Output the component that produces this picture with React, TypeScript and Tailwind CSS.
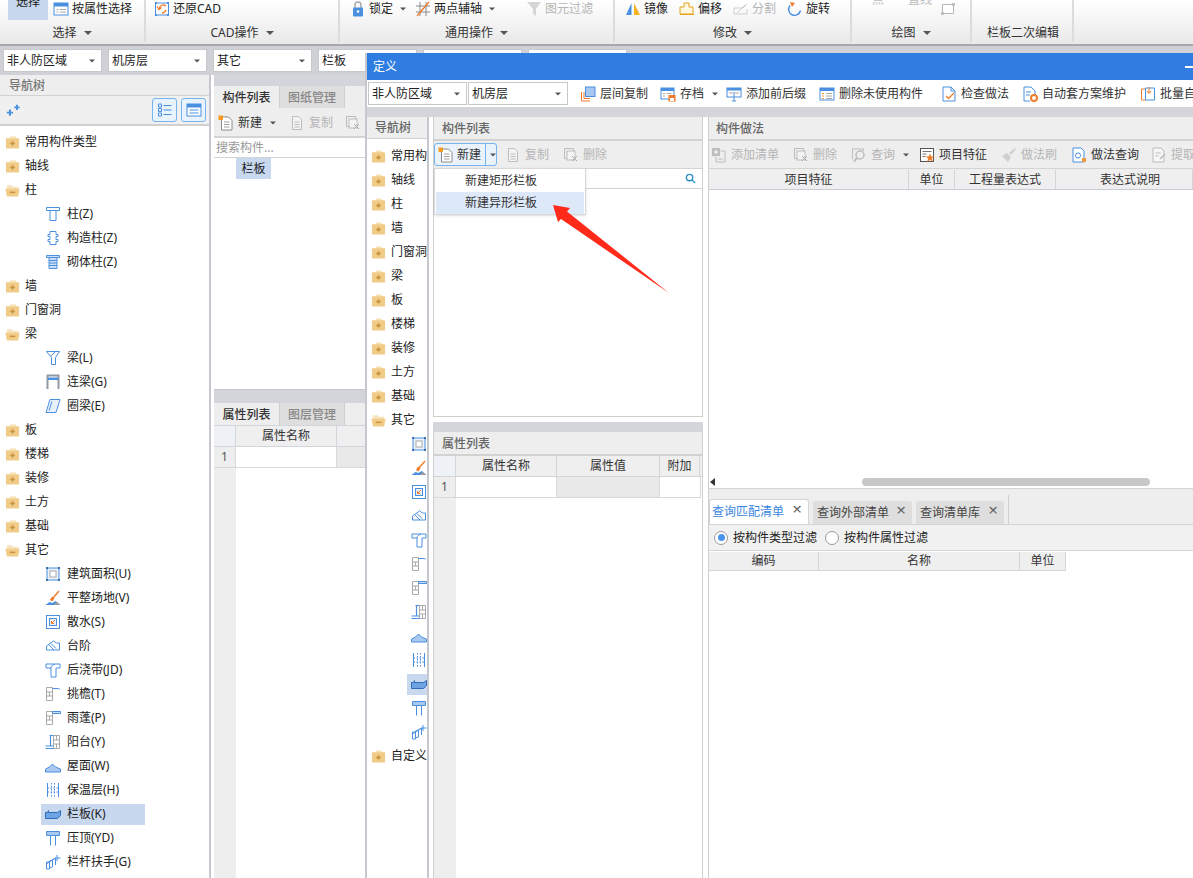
import React from 'react';

const B = '#4a8fe0';
const G = '#a9a9a9';

// 16x16 toolbar and tree icons, drawn to follow the reference glyphs
const glyphs: Record<string, React.ReactNode> = {
  folderClosed: (
    <>
      <path d="M5 1.500h6.500v2.500H5z" fill="#f7e3bb" />
      <rect x="1" y="3.500" width="14" height="11" rx="1" fill="#f0cc88" />
      <path d="M8 6.500v5M5.500 9h5" stroke="#c9913a" strokeWidth="1.500" />
    </>
  ),
  folderOpen: (
    <>
      <path d="M2 2.500h5l1 1.500h6v3H2z" fill="#f7e3bb" />
      <path d="M0.500 6h15l-1.500 8.500H2z" fill="#f0cc88" />
      <path d="M5 10h6" stroke="#c9913a" strokeWidth="1.500" />
    </>
  ),
  zhu: <path d="M1.500 1.500h13v3h-13zM5 4.500v10h6v-10" fill="none" stroke={B} />,
  gouzao: <path d="M5 1.500h6v3h2v2h-2v3h2v2h-2v3H5v-3H3v-2h2v-3H3v-2h2z" fill="#fff" stroke={B} />,
  qiti: <path d="M1.500 1.500h13v2h-13zM4 3.500h8v11H4zM4 6.500h8M4 9h8M4 11.500h8" fill="#cfe0f5" stroke={B} />,
  liang: <path d="M1.500 1.500h13l-4 6v7h-4v-7zM6 6l4-4" fill="none" stroke={B} />,
  lianliang: (
    <>
      <path d="M2.500 15V1.500h11V15" fill="none" stroke="#8f9aa6" strokeWidth="2" />
      <path d="M3 3.500h10v2.500H3z" fill={B} />
    </>
  ),
  quanliang: <path d="M5 1.500h10l-4 13H1zM7 3.500l-3 9" fill="#e9f1fb" stroke={B} />,
  jianzhu: (
    <>
      <rect x="2" y="2" width="12" height="12" fill="#e9f1fb" stroke={B} />
      <rect x="5" y="5" width="6" height="6" fill="#fff" stroke={G} />
      <path d="M1 1h2v2H1zM13 1h2v2h-2zM1 13h2v2H1zM13 13h2v2h-2z" fill="#3f6fae" />
    </>
  ),
  pingzheng: (
    <>
      <path d="M0.500 15l4-3 3 1 3-2 5 4z" fill={B} />
      <path d="M5 10l2-3.500 2.500 1.500-2 3.500z" fill="#ef7d2c" />
      <path d="M8 8l6-7" stroke="#ef7d2c" strokeWidth="1.400" />
      <path d="M9 15l2.500-3.500 3.500 3.500z" fill="#9a9a9a" />
    </>
  ),
  sanshui: (
    <>
      <rect x="1.500" y="1.500" width="13" height="13" fill="#fff" stroke={B} />
      <rect x="4.500" y="4.500" width="7" height="7" fill="#e9f1fb" stroke={B} />
      <path d="M10 6l-3 3M6.500 7v2.500H9" fill="none" stroke="#ef7d2c" />
    </>
  ),
  taijie: <path d="M1.500 8l7-5 3 2h3v7h-13zM4 7l5 5M6 5.500l5 5" fill="#fff" stroke={B} />,
  houjiao: <path d="M1 2h14v4h-4v9H6V6H1zM6 6c0-2 1.500-3 4-4" fill="#fff" stroke={B} />,
  tiaoyan: (
    <>
      <path d="M1.500 1.500h6v13h-6zM1.500 6h6M1.500 10h6M4.500 6v4" fill="none" stroke={G} />
      <path d="M7.500 2.500h6l1.500 1" fill="none" stroke={B} />
    </>
  ),
  yupeng: (
    <>
      <path d="M1.500 1.500h6v13h-6zM1.500 6h6M1.500 10h6M4.500 6v4" fill="none" stroke={G} />
      <path d="M7.500 1.500h8v2h-8z" fill="#cfe0f5" stroke={B} />
    </>
  ),
  yangtai: (
    <>
      <path d="M8.500 1.500h6v13h-6zM8.500 6h6M8.500 10h6M11.500 1.500v4.500M11.500 10v4.500" fill="none" stroke={G} />
      <path d="M4.500 1.500h4M5.500 1.500v10M0.500 12h8M0.500 14.500h8" fill="none" stroke={B} strokeWidth="1.200" />
    </>
  ),
  wumian: <path d="M0.500 11l4-2 3-3 3 3 5 2v3h-15z" fill="#a9c8ef" stroke={B} />,
  baowen: (
    <>
      <path d="M2.500 1v14M13.500 1v14" stroke={B} />
      <path d="M6.500 1v14M9.500 1v14" stroke={B} strokeDasharray="1.500 1.500" />
      <path d="M2.500 6h11M2.500 10h11" stroke={B} strokeDasharray="1.500 1.500" />
    </>
  ),
  lanban: <path d="M0.500 6.500h2l1-2v2h9l3-2v5l-3 3h-12z" fill="#6ea3e4" stroke="#2f6db8" />,
  yading: <path d="M1.500 1.500h13v4h-13zM5.500 5.500v10M10.500 5.500v10" fill="#a9c8ef" stroke={B} />,
  langan: <path d="M1.500 8v7h3V8zM4.500 7l3-1v7l-3 1zM7.500 6l3-2v7M10.500 4h5M12 1v6M1.500 10l9-6" fill="none" stroke={B} />,
  list: (
    <>
      <path d="M1.500 2h3v3h-3zM1.500 6.500h3v3h-3zM1.500 11h3v3h-3z" fill="none" stroke={B} />
      <path d="M6.500 3.500h8M6.500 8h8M6.500 12.500h8" stroke={B} />
    </>
  ),
  panel: (
    <>
      <rect x="1" y="2" width="14" height="12" fill="#fff" stroke={B} />
      <path d="M1 2h14v3.500H1z" fill={B} />
      <path d="M3.500 8h9M3.500 11h9" stroke={B} />
    </>
  ),
  addNode: <path d="M1 11h7M4.500 7.500v7M9.500 5h6M12.500 2v6" stroke={B} strokeWidth="2.200" />,
  attrSel: (
    <>
      <rect x="1" y="2" width="14" height="12" fill="#fff" stroke={B} />
      <path d="M1 2h14v3.500H1z" fill={B} />
      <path d="M3.500 8.500h2M3.500 11h2M7 8.500h6M7 11h6" stroke={G} />
    </>
  ),
  restore: (
    <>
      <rect x="1.500" y="2" width="13" height="12" fill="none" stroke={B} />
      <path d="M1 1h2v2H1zM13 1h2v2h-2zM1 13h2v2H1zM13 13h2v2h-2z" fill={B} />
      <path d="M12 5c-3-2-6-1-7 3M3 5.500l2 3 2.500-2M8 12c2 0 3-1 4-3" fill="none" stroke="#ef7d2c" strokeWidth="1.300" />
    </>
  ),
  lock: (
    <>
      <path d="M5 7V4a3 3 0 016 0v3" fill="none" stroke={G} strokeWidth="1.500" />
      <rect x="3" y="6.500" width="10" height="9" rx="1" fill={B} />
      <circle cx="8" cy="10.500" r="1.300" fill="#fff" />
    </>
  ),
  axis: (
    <>
      <path d="M5 1v14M11 1v14M1 5h14M1 11h14" stroke="#8a8a8a" />
      <path d="M2 15L14 1" stroke="#ef7d2c" strokeWidth="1.300" />
    </>
  ),
  filter: <path d="M1 1h14l-5 7v7l-3-2V8z" fill="#d5d5d5" />,
  mirror: (
    <>
      <path d="M6.500 2v12H1z" fill={B} />
      <path d="M9 2v12h6z" fill="#f5b321" />
    </>
  ),
  offset: <path d="M5 2h5v4h4v7H1V6h4zM1 13.500h14" fill="#fff7de" stroke="#e2a21d" />,
  split: <path d="M1 13V7h9l4-4M1 13h13V8M4 12l8-8" fill="none" stroke="#cfcfcf" />,
  rotate: (
    <>
      <path d="M13.500 9.500A6 6 0 113 4.500" fill="none" stroke={B} strokeWidth="1.400" />
      <path d="M3 1l5 1-3 4z" fill="#ef7d2c" />
    </>
  ),
  rect: <path d="M2.500 3.500h11v9h-11zM1.500 11.500h2v2h-2zM12.500 2.500h2v2h-2z" fill="#fff" stroke="#b8b8b8" />,
  floorCopy: (
    <>
      <path d="M1.500 15V6M1.500 15H10M4 12.500V6M4 12.500h6" fill="none" stroke="#ef7d2c" />
      <rect x="5.500" y="1" width="9.500" height="9.500" fill="#a9c8ef" stroke={B} />
    </>
  ),
  archive: (
    <>
      <rect x="1" y="2" width="13" height="11" fill="#fff" stroke={B} />
      <path d="M1 2h13v3H1z" fill={B} />
      <path d="M3 7.500h2M3 10h2M6.500 7.500h5" stroke={G} />
      <rect x="8.500" y="9" width="7" height="6.500" fill="#ef7d2c" />
      <rect x="10" y="12" width="4" height="3" fill="#fff" />
    </>
  ),
  prefix: (
    <>
      <rect x="1" y="2" width="14" height="9" fill="#fff" stroke={B} />
      <path d="M1 2h14v2.500H1z" fill={B} />
      <path d="M3 7h4M9 7h4" stroke={G} />
      <path d="M8 6v9M6 15h4" stroke={B} />
    </>
  ),
  delUnused: (
    <>
      <rect x="1" y="2" width="14" height="12" fill="#fff" stroke={B} />
      <path d="M1 2h14v3H1z" fill={B} />
      <path d="M3 7.500h2M3 10h2M3 12.500h2" stroke="#ef9a3c" />
      <path d="M7 7.500h6M7 10h6M7 12.500h6" stroke={G} />
    </>
  ),
  check: (
    <>
      <path d="M2 1h8l4 4v10H2z" fill="#fff" stroke={B} />
      <path d="M10 1v4h4" fill="none" stroke={B} />
      <path d="M5 10l2.500 2.500L13 7" fill="none" stroke="#ef7d2c" strokeWidth="1.300" />
    </>
  ),
  autoPlan: (
    <>
      <path d="M2 1h7l4 4v5M2 1v14h6" fill="#fff" stroke={B} />
      <path d="M4 6h5M4 9h4" stroke={B} />
      <circle cx="12" cy="12" r="3" fill="none" stroke="#ef7d2c" strokeWidth="2" />
    </>
  ),
  batch: (
    <>
      <path d="M1.500 3h4v11h-4z" fill="#fff" stroke="#ef7d2c" />
      <path d="M5.500 2h9v12h-9z" fill="#fff" stroke={B} />
      <path d="M9 1v6M7 5l2 2.500L11 5" fill="none" stroke="#ef7d2c" />
    </>
  ),
  newDoc: (
    <>
      <path d="M3.500 2h7l3.500 3.500V15h-10.500z" fill="#fff" stroke="#8a8a8a" />
      <path d="M6 7h5.500M6 9.500h5.500M6 12h5.500" stroke="#a0a0a0" />
      <rect x="0.500" y="0.500" width="4.500" height="4.500" fill="#f59a23" />
    </>
  ),
  copy: (
    <>
      <path d="M3.500 1.500h6l3 3v10h-9z" fill="#f3f3f3" stroke="#bdbdbd" />
      <path d="M5.500 7h5M5.500 9.500h5M5.500 12h5" stroke="#bdbdbd" />
    </>
  ),
  del: (
    <>
      <path d="M1.500 1.500h9v3M1.500 1.500v10h4" fill="none" stroke="#bdbdbd" />
      <rect x="4" y="4" width="8" height="9" fill="#f3f3f3" stroke="#bdbdbd" />
      <path d="M9 9l5 5M14 9l-5 5" stroke="#a8a8a8" />
    </>
  ),
  addList: (
    <>
      <rect x="1" y="1" width="8" height="8" fill="#bdbdbd" />
      <path d="M5 3v4M3 5h4" stroke="#fff" />
      <path d="M9.500 4h4.500v11H5V9.500" fill="none" stroke="#bdbdbd" />
      <path d="M7 12h5" stroke="#bdbdbd" />
    </>
  ),
  query: (
    <>
      <path d="M1.500 12V2h11v2" fill="none" stroke="#bdbdbd" />
      <circle cx="9" cy="8" r="4" fill="none" stroke="#bdbdbd" strokeWidth="1.500" />
      <path d="M6 11l-3 3.500" stroke="#bdbdbd" strokeWidth="2" />
    </>
  ),
  feature: (
    <>
      <rect x="1.500" y="1.500" width="13" height="13" fill="#fff" stroke="#555" />
      <path d="M3.500 4.500h9M3.500 7h4M3.500 9.500h3" stroke="#777" />
      <path d="M11 6.500l1.300 3h3l-2.400 2 .9 3.200L11 13l-2.800 1.700.9-3.200-2.400-2h3z" fill="#ef7d2c" />
    </>
  ),
  brush: <path d="M1 9l5-3 4 4-3 5zM8 6l6-5 1 1-5 6z" fill="#cfcfcf" />,
  methodQuery: (
    <>
      <path d="M2 1h8l3 3v11H2z" fill="#fff" stroke={B} />
      <circle cx="7" cy="8.500" r="2.600" fill="none" stroke={B} />
      <rect x="11" y="11" width="4" height="4" fill="#ef9a3c" />
    </>
  ),
  extract: (
    <>
      <path d="M2 1h8l3 3v11H2z" fill="#f5f5f5" stroke="#bdbdbd" />
      <path d="M4.500 6h5M4.500 9h3" stroke="#bdbdbd" />
      <path d="M9 12l5-5" stroke="#bdbdbd" strokeWidth="1.500" />
    </>
  ),
};

const Icon = ({ name, className = 'w-4 h-4' }: { name: string; className?: string }) => (
  <svg viewBox="0 0 16 16" className={`${className} shrink-0`}>
    {glyphs[name]}
  </svg>
);

const Caret = ({ className = '' }: { className?: string }) => (
  <span className={`inline-block w-0 h-0 border-x-[4px] border-x-transparent border-t-[4px] border-t-[#555] ${className}`} />
);

const Select = ({ label, className = 'w-[99px]' }: { label: string; className?: string }) => (
  <div className={`${className} h-[23px] shrink-0 bg-white border border-[#c6c8cc] flex items-center justify-between pl-[3px] pr-[5px] text-[12px] text-[#222] overflow-hidden`}>
    <span className="whitespace-nowrap">{label}</span>
    <Caret className="scale-75" />
  </div>
);

type ToolItem = { icon?: string; text?: string; off?: boolean; caret?: boolean; ml: string };

const RibbonItem = ({ icon, text, off, caret, ml }: ToolItem) => (
  <div className={`flex items-center h-[17px] gap-[3px] ${ml}`}>
    {icon && <Icon name={icon} />}
    {text && <span className={off ? 'text-[#b5b5b5]' : 'text-[#222]'}>{text}</span>}
    {caret && <Caret className="ml-[3px] scale-75" />}
  </div>
);

const RibbonGroup = ({ width, label, caret = true, children }: { width: string; label: string; caret?: boolean; children?: React.ReactNode }) => (
  <div className={`${width} h-[42px] shrink-0 border-r-2 border-[#dcdcdc] flex flex-col`}>
    <div className="flex h-[17px] relative">{children}</div>
    <div className="flex-1 flex items-center justify-center gap-[7px] pt-[7px] text-[#333]">
      {label}
      {caret && <Caret />}
    </div>
  </div>
);

const Ribbon = () => (
  <div className="h-[46px] shrink-0 flex bg-gradient-to-b from-white to-[#e9e9e9] border-b-2 border-[#a8a8a8] text-[12px] overflow-hidden">
    <RibbonGroup width="w-[146px]" label="选择">
      <div className="w-[40px] h-[20px] ml-[8px] bg-[#c7d7ee] text-center leading-[4px] overflow-hidden text-[#222] shrink-0">选择</div>
      <RibbonItem icon="attrSel" text="按属性选择" ml="ml-[5px]" />
    </RibbonGroup>
    <RibbonGroup width="w-[194px]" label="CAD操作">
      <RibbonItem icon="restore" text="还原CAD" ml="ml-[8px]" />
    </RibbonGroup>
    <RibbonGroup width="w-[275px]" label="通用操作">
      <RibbonItem icon="lock" text="锁定" caret ml="ml-[10px]" />
      <RibbonItem icon="axis" text="两点辅轴" caret ml="ml-[8px]" />
      <RibbonItem icon="filter" text="图元过滤" off ml="ml-[30px]" />
    </RibbonGroup>
    <RibbonGroup width="w-[237px]" label="修改">
      <RibbonItem icon="mirror" text="镜像" ml="ml-[10px]" />
      <RibbonItem icon="offset" text="偏移" ml="ml-[11px]" />
      <RibbonItem icon="split" text="分割" off ml="ml-[11px]" />
      <RibbonItem icon="rotate" text="旋转" ml="ml-[11px]" />
    </RibbonGroup>
    <RibbonGroup width="w-[120px]" label="绘图">
      <div className="ml-[20px] -mt-[9px] text-[#bbb]">点</div>
      <div className="ml-[24px] -mt-[9px] text-[#bbb]">直线</div>
      <RibbonItem icon="rect" ml="ml-[8px]" />
    </RibbonGroup>
    <div className="w-[102px] h-[42px] shrink-0 border-r-2 border-[#dcdcdc] flex items-end justify-center pl-[2px] text-[#333]">栏板二次编辑</div>
  </div>
);

type Node = { icon: string; label: string; selected?: boolean };

const otherKids: Node[] = [
  { icon: 'jianzhu', label: '建筑面积(U)' },
  { icon: 'pingzheng', label: '平整场地(V)' },
  { icon: 'sanshui', label: '散水(S)' },
  { icon: 'taijie', label: '台阶' },
  { icon: 'houjiao', label: '后浇带(JD)' },
  { icon: 'tiaoyan', label: '挑檐(T)' },
  { icon: 'yupeng', label: '雨蓬(P)' },
  { icon: 'yangtai', label: '阳台(Y)' },
  { icon: 'wumian', label: '屋面(W)' },
  { icon: 'baowen', label: '保温层(H)' },
  { icon: 'lanban', label: '栏板(K)', selected: true },
  { icon: 'yading', label: '压顶(YD)' },
  { icon: 'langan', label: '栏杆扶手(G)' },
];

const Folder = ({ label, open, indent }: { label: string; open?: boolean; indent: string }) => (
  <div className={`h-6 flex items-center gap-[5px] whitespace-nowrap ${indent}`}>
    <Icon name={open ? 'folderOpen' : 'folderClosed'} className="w-[15px] h-[15px]" />
    {label}
  </div>
);

const Child = ({ icon, label, selected }: Node) => (
  <div className="h-6 pl-[41px] flex items-center">
    <div className={`w-[104px] h-[21px] flex items-center pl-[4px] gap-[6px] whitespace-nowrap ${selected ? 'bg-[#c7d8ef]' : ''}`}>
      <Icon name={icon} />
      {label}
    </div>
  </div>
);

const MainTree = () => (
  <div className="flex-1 pt-[4px] text-[12px] text-[#222] bg-white overflow-hidden">
    {['常用构件类型', '轴线'].map(l => <Folder key={l} label={l} indent="pl-[5px]" />)}
    <Folder label="柱" open indent="pl-[5px]" />
    {[['zhu', '柱(Z)'], ['gouzao', '构造柱(Z)'], ['qiti', '砌体柱(Z)']].map(([i, l]) => <Child key={l} icon={i} label={l} />)}
    {['墙', '门窗洞'].map(l => <Folder key={l} label={l} indent="pl-[5px]" />)}
    <Folder label="梁" open indent="pl-[5px]" />
    {[['liang', '梁(L)'], ['lianliang', '连梁(G)'], ['quanliang', '圈梁(E)']].map(([i, l]) => <Child key={l} icon={i} label={l} />)}
    {['板', '楼梯', '装修', '土方', '基础'].map(l => <Folder key={l} label={l} indent="pl-[5px]" />)}
    <Folder label="其它" open indent="pl-[5px]" />
    {otherKids.map(k => <Child key={k.label} {...k} />)}
  </div>
);

const DialogTree = () => (
  <div className="flex-1 pt-[5px] text-[12px] text-[#222] bg-white overflow-hidden">
    {['常用构件类型', '轴线', '柱', '墙', '门窗洞', '梁', '板', '楼梯', '装修', '土方', '基础'].map(l => <Folder key={l} label={l} indent="pl-[4px]" />)}
    <Folder label="其它" open indent="pl-[4px]" />
    {otherKids.map(k => (
      <div key={k.label} className="h-6 pl-[40px] flex items-center">
        <div className={`w-[21px] h-[21px] flex items-center pl-[4px] ${k.selected ? 'bg-[#c7d8ef]' : ''}`}>
          <Icon name={k.icon} />
        </div>
      </div>
    ))}
    <Folder label="自定义" indent="pl-[4px]" />
  </div>
);

const PanelTool = ({ icon, text, off = true, caret, ml }: ToolItem) => (
  <div className={`flex items-center gap-[4px] whitespace-nowrap ${ml}`}>
    {icon && <Icon name={icon} />}
    <span className={off ? 'text-[#b5b5b5]' : 'text-[#333]'}>{text}</span>
    {caret && <Caret className="ml-[3px] scale-75" />}
  </div>
);

const PanelHead = ({ label, pad = 'pl-[8px]' }: { label: string; pad?: string }) => (
  <div className={`h-[21px] pt-px shrink-0 bg-[#eeeeee] flex items-center ${pad} text-[12px] font-medium text-[#666] border-b-2 border-[#d2d2d2] box-content`}>
    {label}
  </div>
);

const TabHead = ({ a, b }: { a: string; b: string }) => (
  <div className="h-[22px] shrink-0 flex bg-[#eeeeee] text-[12px] font-medium">
    <div className="w-[65px] pt-px flex items-center justify-center bg-[#eeeeee] text-[#333]">{a}</div>
    <div className="w-[66px] pt-px flex items-center justify-center bg-[#dedede] text-[#888] border-x border-[#d0d0d0]">{b}</div>
  </div>
);

const cell = 'flex items-center justify-center border-r border-[#d2d6dc] text-[#333] text-[12px]';

const LeftPane = () => (
  <div className="w-[214px] shrink-0 flex flex-col bg-white">
    <div className="flex-1 flex flex-col border-r-2 border-[#c6c8ce] mr-[3px] overflow-hidden">
      <div className="h-[21px] pt-px bg-[#eeeeee] flex items-center pl-[9px] text-[12px] font-medium text-[#777] shrink-0 border-b border-[#d2d2d2]">导航树</div>
      <div className="h-[30px] bg-[#f0f0f0] flex items-center justify-between pl-[6px] pr-[3px] border-b-2 border-[#d0d0d0] shrink-0">
        <Icon name="addNode" className="w-[14px] h-[14px]" />
        <div className="flex gap-[4px]">
          <div className="w-[25px] h-[24px] rounded-[3px] border border-[#76b4ee] bg-[#e8f3fd] flex items-center justify-center"><Icon name="list" /></div>
          <div className="w-[25px] h-[24px] rounded-[3px] border border-[#76b4ee] bg-[#e8f3fd] flex items-center justify-center"><Icon name="panel" /></div>
        </div>
      </div>
      <MainTree />
    </div>
  </div>
);

const MiddlePane = () => (
  <div className="w-[151px] shrink-0 flex flex-col overflow-hidden bg-white">
    <div className="h-[11px] bg-[#d3d5da] shrink-0" />
    <TabHead a="构件列表" b="图纸管理" />
    <div className="h-[30px] pt-[2px] shrink-0 bg-[#eeeeee] flex items-center pl-[4px] text-[12px] border-b-2 border-[#d4d4d4]">
      <PanelTool icon="newDoc" text="新建" off={false} caret ml="" />
      <PanelTool icon="copy" text="复制" ml="ml-[12px]" />
      <PanelTool icon="del" text="删除" ml="ml-[12px]" />
    </div>
    <div className="h-[20px] pt-px shrink-0 flex items-center pl-[2px] text-[12px] text-[#999] border-b border-[#d4d4d4] whitespace-nowrap">搜索构件...</div>
    <div className="h-[231px] shrink-0 pl-[22px] text-[12px] text-[#222]">
      <div className="w-[35px] h-[21px] bg-[#c7d8ef] flex items-center justify-center">栏板</div>
    </div>
    <div className="h-[14px] shrink-0 bg-[#d3d5da] border-t border-[#c8c8c8]" />
    <TabHead a="属性列表" b="图层管理" />
    <div className="flex h-[20px] shrink-0 bg-[#efefef] border-y border-[#d2d6dc] box-content">
      <div className={`w-[22px] bg-[#eef2f7] ${cell}`} />
      <div className={`w-[101px] ${cell}`}>属性名称</div>
    </div>
    <div className="flex-1 flex">
      <div className="w-[22px] bg-[#eeeeee]">
        <div className="h-[21px] flex items-center justify-center text-[12px] text-[#555] border-b border-[#d8d8d8] border-r">1</div>
      </div>
      <div className="w-[101px] h-[21px] border-b border-r border-[#d8d8d8]" />
      <div className="flex-1 h-[21px] bg-[#e9e9e9] border-b border-[#d8d8d8]" />
    </div>
  </div>
);

const DialogToolbar = () => (
  <div className="h-[27px] shrink-0 bg-white flex items-center text-[12px] text-[#333] pl-px overflow-hidden">
    <Select label="非人防区域" />
    <Select label="机房层" className="w-[100px] ml-px" />
    <div className="w-px h-[19px] bg-[#ccc] ml-[4px]" />
    <PanelTool icon="floorCopy" text="层间复制" off={false} ml="ml-[8px]" />
    <PanelTool icon="archive" text="存档" off={false} caret ml="ml-[12px]" />
    <PanelTool icon="prefix" text="添加前后缀" off={false} ml="ml-[7px]" />
    <PanelTool icon="delUnused" text="删除未使用构件" off={false} ml="ml-[13px]" />
    <div className="w-px h-[19px] bg-[#ccc] ml-[9px]" />
    <PanelTool icon="check" text="检查做法" off={false} ml="ml-[9px]" />
    <PanelTool icon="autoPlan" text="自动套方案维护" off={false} ml="ml-[13px]" />
    <PanelTool icon="batch" text="批量自动套" off={false} ml="ml-[14px]" />
  </div>
);

const ListColumn = () => (
  <div className="w-[270px] shrink-0 ml-[4px] flex flex-col">
    <div className="h-[300px] shrink-0 flex flex-col border-x border-b border-[#cfcfcf] relative">
      <PanelHead label="构件列表" />
      <div className="h-[28px] shrink-0 bg-[#eeeeee] flex items-center text-[12px] border-b border-[#d4d4d4]">
        <div className="w-[63px] h-[23px] bg-[#eaf3fc] border border-[#76b4ee] rounded-[3px] flex items-center text-[#333] relative">
          <Icon name="newDoc" className="ml-[3px] w-4 h-4" />
          <span className="ml-[3px]">新建</span>
          <span className="absolute left-[50px] top-0 bottom-0 w-px bg-[#76b4ee]" />
          <Caret className="absolute left-[54px] top-[9px] scale-75" />
        </div>
        <PanelTool icon="copy" text="复制" ml="ml-[8px]" />
        <PanelTool icon="del" text="删除" ml="ml-[14px]" />
      </div>
      <div className="h-[20px] shrink-0 flex items-center justify-end pr-[6px] border-b border-[#d4d4d4]">
        <svg viewBox="0 0 12 12" className="w-[11px] h-[11px]">
          <circle cx="5" cy="5" r="3.500" fill="none" stroke="#2b8fc4" strokeWidth="1.500" />
          <path d="M7.500 7.500l3.500 3.500" stroke="#2b8fc4" strokeWidth="1.500" />
        </svg>
      </div>
      <div className="flex-1 bg-white" />
      {/* dropdown of the 新建 button */}
      <div className="absolute left-0 top-[51px] w-[152px] h-[47px] bg-white border border-[#d8d8d8] shadow-sm p-px text-[12px] text-[#333] z-10">
        <div className="h-[22px] flex items-center pl-[29px]">新建矩形栏板</div>
        <div className="h-[22px] flex items-center pl-[29px] bg-[#dde8f8]">新建异形栏板</div>
      </div>
    </div>
    <div className="h-[5px] shrink-0 bg-white" />
    <div className="h-[10px] shrink-0 bg-[#d3d5da]" />
    <div className="flex-1 flex flex-col border-x border-[#cfcfcf] overflow-hidden">
      <PanelHead label="属性列表" />
      <div className="flex h-[21px] shrink-0 bg-[#efefef] border-b border-[#d4d4d4] pr-[2px]">
        <div className={`w-[22px] bg-[#eef2f7] ${cell}`} />
        <div className={`w-[101px] ${cell}`}>属性名称</div>
        <div className={`w-[103px] ${cell}`}>属性值</div>
        <div className={`flex-1 ${cell}`}>附加</div>
      </div>
      <div className="flex-1 flex">
        <div className="w-[22px] bg-[#eeeeee]">
          <div className="h-[21px] flex items-center justify-center text-[12px] text-[#555] border-b border-r border-[#d8d8d8]">1</div>
        </div>
        <div className="w-[101px] h-[21px] border-b border-r border-[#d8d8d8]" />
        <div className="w-[103px] h-[21px] bg-[#e9e9e9] border-b border-r border-[#d8d8d8]" />
        <div className="w-[41px] h-[21px] border-b border-r border-[#d8d8d8]" />
      </div>
    </div>
  </div>
);

const QueryTab = ({ label, width, active }: { label: string; width: string; active?: boolean }) => (
  <div className={`${width} shrink-0 rounded-t-[3px] flex items-center justify-between pr-[6px] text-[12px] ${active ? 'h-[25px] pl-[2px] bg-white text-[#3a86e0] border-t border-x border-[#d4d4d4]' : 'h-[23px] pl-[4px] bg-[#dedede] text-[#444]'}`}>
    <span className="whitespace-nowrap">{label}</span>
    <span className="text-[#666] text-[17px] leading-none -mt-[7px]">×</span>
  </div>
);

const Radio = ({ label, checked }: { label: string; checked?: boolean }) => (
  <div className="flex items-center gap-[5px] whitespace-nowrap">
    <span className="w-[14px] h-[14px] rounded-full border border-[#9a9a9a] bg-white flex items-center justify-center">
      {checked && <span className="w-[7px] h-[7px] rounded-full bg-[#4a94ee]" />}
    </span>
    {label}
  </div>
);

const MethodColumn = () => (
  <div className="flex-1 ml-[5px] flex flex-col min-w-0 border-l border-[#cfcfcf]">
    <PanelHead label="构件做法" pad="pl-[7px]" />
    <div className="h-[28px] shrink-0 bg-[#eeeeee] flex items-center pl-[2px] text-[12px] border-b border-[#d4d4d4] whitespace-nowrap overflow-hidden">
      <PanelTool icon="addList" text="添加清单" ml="" />
      <PanelTool icon="del" text="删除" ml="ml-[14px]" />
      <PanelTool icon="query" text="查询" caret ml="ml-[14px]" />
      <PanelTool icon="feature" text="项目特征" off={false} ml="ml-[9px]" />
      <PanelTool icon="brush" text="做法刷" ml="ml-[14px]" />
      <PanelTool icon="methodQuery" text="做法查询" off={false} ml="ml-[14px]" />
      <PanelTool icon="extract" text="提取做法" ml="ml-[12px]" />
    </div>
    <div className="h-[21px] shrink-0 flex bg-[#efefef] border-b border-[#c8ccd6] pt-px">
      <div className={`w-[200px] ${cell}`}>项目特征</div>
      <div className={`w-[46px] ${cell}`}>单位</div>
      <div className={`w-[101px] ${cell}`}>工程量表达式</div>
      <div className={`flex-1 pl-[12px] ${cell}`}>表达式说明</div>
    </div>
    <div className="h-[299px] shrink-0 bg-white flex flex-col justify-end border-b border-[#d4d4d4]">
      <div className="h-[11px] mb-[1px] flex items-center relative">
        <span className="ml-[1px] w-0 h-0 border-y-[4px] border-y-transparent border-r-[5px] border-r-[#333]" />
        <span className="ml-[147px] w-[288px] h-[8px] rounded-full bg-[#c8c8c8]" />
      </div>
    </div>
    <div className="h-[36px] shrink-0 bg-[#eeeeee] flex items-end gap-[4px] border-b border-[#d4d4d4]">
      <QueryTab label="查询匹配清单" width="w-[100px]" active />
      <QueryTab label="查询外部清单" width="w-[99px]" />
      <QueryTab label="查询清单库" width="w-[88px]" />
      <div className="w-px h-[29px] bg-[#d0d0d0]" />
    </div>
    <div className="h-[26px] shrink-0 bg-[#f1f1f1] flex items-center gap-[8px] pl-[5px] text-[12px] text-[#222] border-b border-[#d4d4d4]">
      <Radio label="按构件类型过滤" checked />
      <Radio label="按构件属性过滤" />
    </div>
    <div className="h-[20px] pt-px shrink-0 flex">
      <div className={`w-[110px] bg-[#efefef] border-b border-[#c8ccd6] ${cell}`}>编码</div>
      <div className={`w-[201px] bg-[#efefef] border-b border-[#c8ccd6] ${cell}`}>名称</div>
      <div className={`w-[46px] bg-[#efefef] border-b border-[#c8ccd6] ${cell}`}>单位</div>
    </div>
    <div className="flex-1 bg-white" />
  </div>
);

const DefineDialog = () => (
  <div className="absolute left-[365px] top-[53px] right-0 bottom-0 flex flex-col border-l-2 border-[#c6c8ce] bg-white">
    <div className="h-[27px] shrink-0 bg-[#2f7de1] flex items-center justify-between text-[12px] text-white pl-[6px]">
      定义
      <span className="w-[8px] h-[2px] bg-white" />
    </div>
    <DialogToolbar />
    <div className="h-[10px] shrink-0 bg-[#d3d5da]" />
    <div className="flex-1 flex min-h-0">
      <div className="w-[60px] shrink-0 flex flex-col overflow-hidden border-r-2 border-[#c6c8ce] box-content">
        <div className="h-[22px] shrink-0 bg-[#eeeeee] flex items-center pl-[8px] text-[12px] font-medium text-[#666] border-b border-[#d2d2d2]">导航树</div>
        <DialogTree />
      </div>
      <ListColumn />
      <MethodColumn />
    </div>
  </div>
);

const RedArrow = () => (
  <svg viewBox="0 0 130 100" className="absolute left-[545px] top-[200px] w-[130px] h-[100px] z-20">
    <path d="M8 5l17 3-3 3.500 102 81.500L16 19l-3 3z" fill="#ff2a1a" />
  </svg>
);

export default function App() {
  return (
    <div className="relative w-[1193px] h-[878px] overflow-hidden bg-white flex flex-col font-['Noto_Sans','Noto_Sans_CJK_SC',sans-serif]">
      <Ribbon />
      <div className="h-[29px] shrink-0 bg-[#cfd1d6] flex items-center gap-[6px] pl-[3px]">
        {['非人防区域', '机房层', '其它', '栏板', '', ''].map((l, i) => <Select key={i} label={l} />)}
      </div>
      <div className="flex-1 flex min-h-0">
        <LeftPane />
        <MiddlePane />
      </div>
      <DefineDialog />
      <RedArrow />
    </div>
  );
}
